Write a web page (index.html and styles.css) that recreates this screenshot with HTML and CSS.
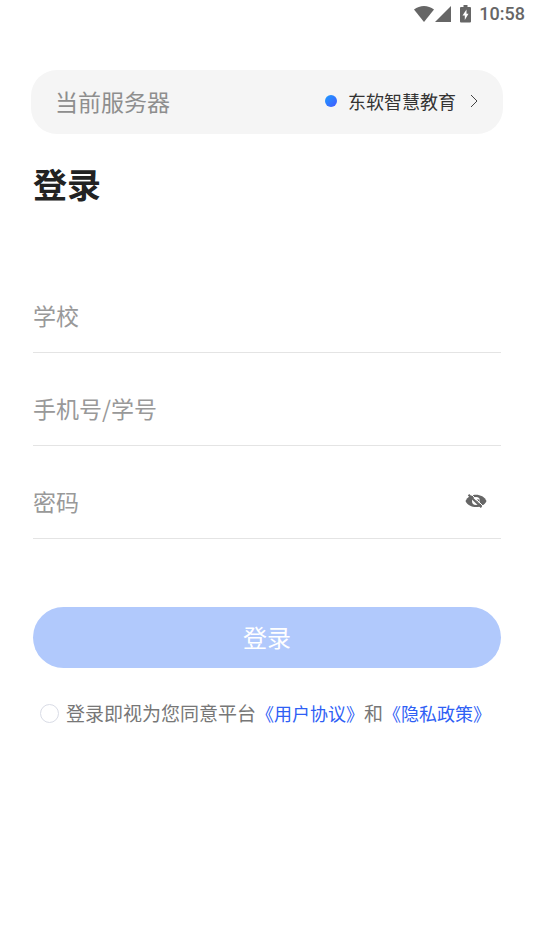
FILE: index.html
```html
<!DOCTYPE html>
<html lang="zh-CN">
<head>
<meta charset="utf-8">
<meta name="viewport" content="width=device-width, initial-scale=1">
<title>登录</title>
<link rel="stylesheet" href="styles.css">
</head>
<body>
<header class="status">
  <svg class="status-wifi" viewBox="0 0 20 16" aria-hidden="true"><path d="M0 3.6C5.8-1.2 14.2-1.2 20 3.6L10 16Z"/></svg>
  <svg class="status-signal" viewBox="0 0 16 16" aria-hidden="true"><path d="M16 0V16H0Z"/></svg>
  <svg class="status-battery" viewBox="0 0 11 18" aria-hidden="true"><path fill-rule="evenodd" d="M3.500 0h4v2H10q1 0 1 1v13.500q0 1-1 1H1q-1 0-1-1V3q0-1 1-1h2.500ZM6.500 4.500 2.500 10.500h2.300V15L8.500 8.800H6.500Z"/></svg>
  <time>10:58</time>
</header>
<main class="page">
  <button type="button" class="server">
    <span class="server-label">当前服务器</span>
    <span class="dot"></span>
    <span class="server-name">东软智慧教育</span>
    <svg class="chevron" viewBox="0 0 8 14" aria-hidden="true"><path d="M1 1l6 6-6 6"/></svg>
  </button>
  <h1>登录</h1>
  <form class="form">
    <div class="field"><input type="text" placeholder="学校" aria-label="学校"></div>
    <div class="field"><input type="text" placeholder="手机号/学号" aria-label="手机号/学号"></div>
    <div class="field">
      <input type="password" placeholder="密码" aria-label="密码">
      <button type="button" class="eye" aria-label="显示密码">
        <svg viewBox="0 0 22 14" aria-hidden="true">
          <path class="eye-shape" d="M.5 7C4-1.500 18-1.500 21.500 7C18 15 4 15 .5 7Z"/>
          <circle class="eye-ring" cx="11" cy="7" r="4"/>
          <path class="eye-shape" d="M11 5.500h3.500v3H13Z"/>
          <path class="eye-gap" d="M5.500-.5 18.500 12.500"/>
          <path class="eye-slash" d="M3.500 .8 16.500 13.300"/>
        </svg>
      </button>
    </div>
    <button type="button" class="submit">登录</button>
    <div class="agree">
      <input type="checkbox" id="agree">
      <p><label for="agree">登录即视为您同意平台</label><a href="#terms">《用户协议》</a>和<a href="#privacy">《隐私政策》</a></p>
    </div>
  </form>
</main>
</body>
</html>
```
FILE: styles.css
```css
* {
  box-sizing: border-box;
}

body {
  margin: 0;
  background: #fff;
  color: #222;
  font-family: "Noto Sans CJK SC", sans-serif;
}

button,
input {
  margin: 0;
  padding: 0;
  border: 0;
  background: none;
  font: inherit;
}

.status {
  display: flex;
  align-items: center;
  justify-content: flex-end;
  height: 28px;
  padding-right: 9px;
  color: #666;
  font: 500 18px/28px Roboto, sans-serif;
}

.status svg {
  fill: #666;
}

.status-wifi {
  width: 20px;
  height: 16px;
  margin-right: 1px;
}

.status-signal {
  width: 16px;
  height: 16px;
  margin-right: 9px;
}

.status-battery {
  width: 11px;
  height: 18px;
  margin-right: 8px;
}

.page {
  padding: 42px 33px 0;
}

.server {
  display: flex;
  align-items: center;
  width: calc(100% + 4px);
  height: 64px;
  margin: 0 -2px;
  padding: 0 25px 2px 24px;
  border-radius: 26px;
  background: #f5f5f5;
  text-align: left;
}

.server-label {
  flex: 1;
  color: #8e8e8e;
  font-size: 23px;
}

.dot {
  width: 12px;
  height: 12px;
  margin-right: 11px;
  border-radius: 50%;
  background: linear-gradient(135deg, #1c9dff, #4458ff);
}

.server-name {
  margin-right: 14px;
  color: #333;
  font-size: 18px;
}

.chevron {
  width: 8px;
  height: 14px;
  fill: none;
  stroke: #444;
}

h1 {
  margin: 24px 0 0;
  font-size: 34px;
  font-weight: 700;
  line-height: 52px;
}

.form {
  margin-top: 50px;
}

.field {
  display: flex;
  align-items: center;
  height: 93px;
  padding: 18px 14px 0 0;
  border-bottom: 1px solid #e4e4e4;
}

.field input {
  flex: 1;
  min-width: 0;
  height: 48px;
  outline: 0;
  color: #333;
  font-size: 23px;
}

.field input::placeholder {
  color: #999;
  opacity: 1;
}

.eye svg {
  display: block;
  width: 22px;
  height: 14px;
}

.eye-shape {
  fill: #666;
}

.eye-ring {
  fill: #fff;
}

.eye-gap {
  stroke: #fff;
  stroke-width: 1;
}

.eye-slash {
  stroke: #666;
  stroke-width: 2;
}

.submit {
  display: block;
  width: 100%;
  height: 61px;
  margin-top: 68px;
  padding-bottom: 2px;
  border-radius: 31px;
  background: #b1c9fc;
  color: #fff;
  font-size: 24px;
}

.agree {
  display: flex;
  align-items: center;
  gap: 7px;
  margin-top: 31px;
  padding-left: 7px;
}

.agree input {
  appearance: none;
  flex: none;
  width: 19px;
  height: 19px;
  border: 1px solid #d9dce6;
  border-radius: 50%;
}

.agree input:checked {
  background: #2f5ff5;
}

.agree p {
  margin: 0;
  color: #777;
  font-size: 19px;
  line-height: 28px;
  white-space: nowrap;
}

.agree a {
  color: #2f5ff5;
  font-size: 18px;
  text-decoration: none;
}
```
